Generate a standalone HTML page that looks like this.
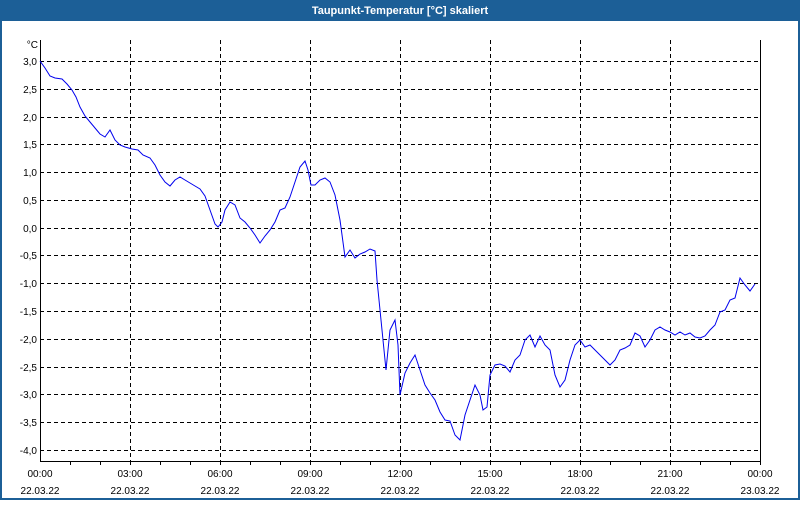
<!DOCTYPE html>
<html><head><meta charset="utf-8"><style>
body{margin:0;width:800px;height:500px;overflow:hidden;background:#fff;font-family:"Liberation Sans",sans-serif}
</style></head><body>
<svg width="800" height="500" xmlns="http://www.w3.org/2000/svg" font-family="Liberation Sans, sans-serif">
<rect x="0" y="0" width="800" height="500" fill="#1c5f97"/>
<rect x="2" y="21" width="796" height="477" fill="#fff"/>
<text x="400" y="14" fill="#fff" font-size="11" font-weight="bold" text-anchor="middle">Taupunkt-Temperatur [°C] skaliert</text>
<g stroke="#000" stroke-width="1" stroke-dasharray="4,3" shape-rendering="crispEdges">
<line x1="40" x2="760" y1="61.5" y2="61.5"/><line x1="40" x2="760" y1="89.5" y2="89.5"/><line x1="40" x2="760" y1="117.5" y2="117.5"/><line x1="40" x2="760" y1="144.5" y2="144.5"/><line x1="40" x2="760" y1="172.5" y2="172.5"/><line x1="40" x2="760" y1="200.5" y2="200.5"/><line x1="40" x2="760" y1="228.5" y2="228.5"/><line x1="40" x2="760" y1="255.5" y2="255.5"/><line x1="40" x2="760" y1="283.5" y2="283.5"/><line x1="40" x2="760" y1="311.5" y2="311.5"/><line x1="40" x2="760" y1="339.5" y2="339.5"/><line x1="40" x2="760" y1="367.5" y2="367.5"/><line x1="40" x2="760" y1="394.5" y2="394.5"/><line x1="40" x2="760" y1="422.5" y2="422.5"/><line x1="40" x2="760" y1="450.5" y2="450.5"/>
<line x1="130.5" x2="130.5" y1="40" y2="461"/><line x1="220.5" x2="220.5" y1="40" y2="461"/><line x1="310.5" x2="310.5" y1="40" y2="461"/><line x1="400.5" x2="400.5" y1="40" y2="461"/><line x1="490.5" x2="490.5" y1="40" y2="461"/><line x1="580.5" x2="580.5" y1="40" y2="461"/><line x1="670.5" x2="670.5" y1="40" y2="461"/>
</g>
<g stroke="#000" stroke-width="1" shape-rendering="crispEdges" fill="none">
<polyline points="40.5,40 40.5,461.5 760.5,461.5 760.5,40"/>
<path d="M70.5 461v4M100.5 461v4M130.5 461v4M160.5 461v4M190.5 461v4M220.5 461v4M250.5 461v4M280.5 461v4M310.5 461v4M340.5 461v4M370.5 461v4M400.5 461v4M430.5 461v4M460.5 461v4M490.5 461v4M520.5 461v4M550.5 461v4M580.5 461v4M610.5 461v4M640.5 461v4M670.5 461v4M700.5 461v4M730.5 461v4M760.5 461v4"/>
</g>
<polyline fill="none" stroke="#0000ee" stroke-width="1" points="40,61 45,68 50,76 55,78 62,79 67,84 72,90 76,97 80,107 85,116 90,122 95,128 100,134 105,137 110,130 115,140 120,145 125,147 132,149 138,150 143,155 150,158 155,165 160,175 165,182 170,186 175,180 180,177 185,180 190,183 195,186 200,189 205,196 210,210 215,224 218,227 222,222 225,210 230,202 235,205 240,218 245,222 250,228 255,235 260,243 265,236 270,230 275,222 280,210 285,208 290,197 295,182 300,167 305,161 308,170 311,185 315,185 320,180 325,178 330,182 335,195 340,220 345,257 350,250 355,258 360,254 365,252 370,249 375,251 377,280 380,310 383,340 386,370 390,330 395,320 398,345 400,395 405,373 410,363 415,355 420,370 425,385 430,393 435,400 440,412 445,420 450,421 455,435 460,440 465,415 470,400 475,385 480,395 483,410 487,407 490,375 495,365 500,364 505,366 510,372 515,360 520,355 525,340 530,335 535,347 540,336 545,345 550,350 555,375 560,387 565,380 570,360 575,345 580,340 585,347 590,345 595,350 600,355 605,360 610,365 615,360 620,350 625,348 630,345 635,333 640,336 645,347 650,340 655,330 660,327 665,330 670,332 675,335 680,332 685,335 690,333 695,337 700,338 705,336 710,330 715,325 720,312 725,310 730,300 735,298 740,278 745,285 750,291 755,284"/>
<g font-size="10" fill="#000" text-anchor="end">
<text x="38" y="48">°C</text>
<text x="37" y="65">3,0</text><text x="37" y="93">2,5</text><text x="37" y="121">2,0</text><text x="37" y="148">1,5</text><text x="37" y="176">1,0</text><text x="37" y="204">0,5</text><text x="37" y="232">0,0</text><text x="37" y="259">-0,5</text><text x="37" y="287">-1,0</text><text x="37" y="315">-1,5</text><text x="37" y="343">-2,0</text><text x="37" y="371">-2,5</text><text x="37" y="398">-3,0</text><text x="37" y="426">-3,5</text><text x="37" y="454">-4,0</text>
</g>
<g font-size="10" fill="#000" text-anchor="middle">
<text x="40" y="477">00:00</text><text x="40" y="494">22.03.22</text>
<text x="130" y="477">03:00</text><text x="130" y="494">22.03.22</text>
<text x="220" y="477">06:00</text><text x="220" y="494">22.03.22</text>
<text x="310" y="477">09:00</text><text x="310" y="494">22.03.22</text>
<text x="400" y="477">12:00</text><text x="400" y="494">22.03.22</text>
<text x="490" y="477">15:00</text><text x="490" y="494">22.03.22</text>
<text x="580" y="477">18:00</text><text x="580" y="494">22.03.22</text>
<text x="670" y="477">21:00</text><text x="670" y="494">22.03.22</text>
<text x="760" y="477">00:00</text><text x="760" y="494">23.03.22</text>
</g>
</svg>
</body></html>
